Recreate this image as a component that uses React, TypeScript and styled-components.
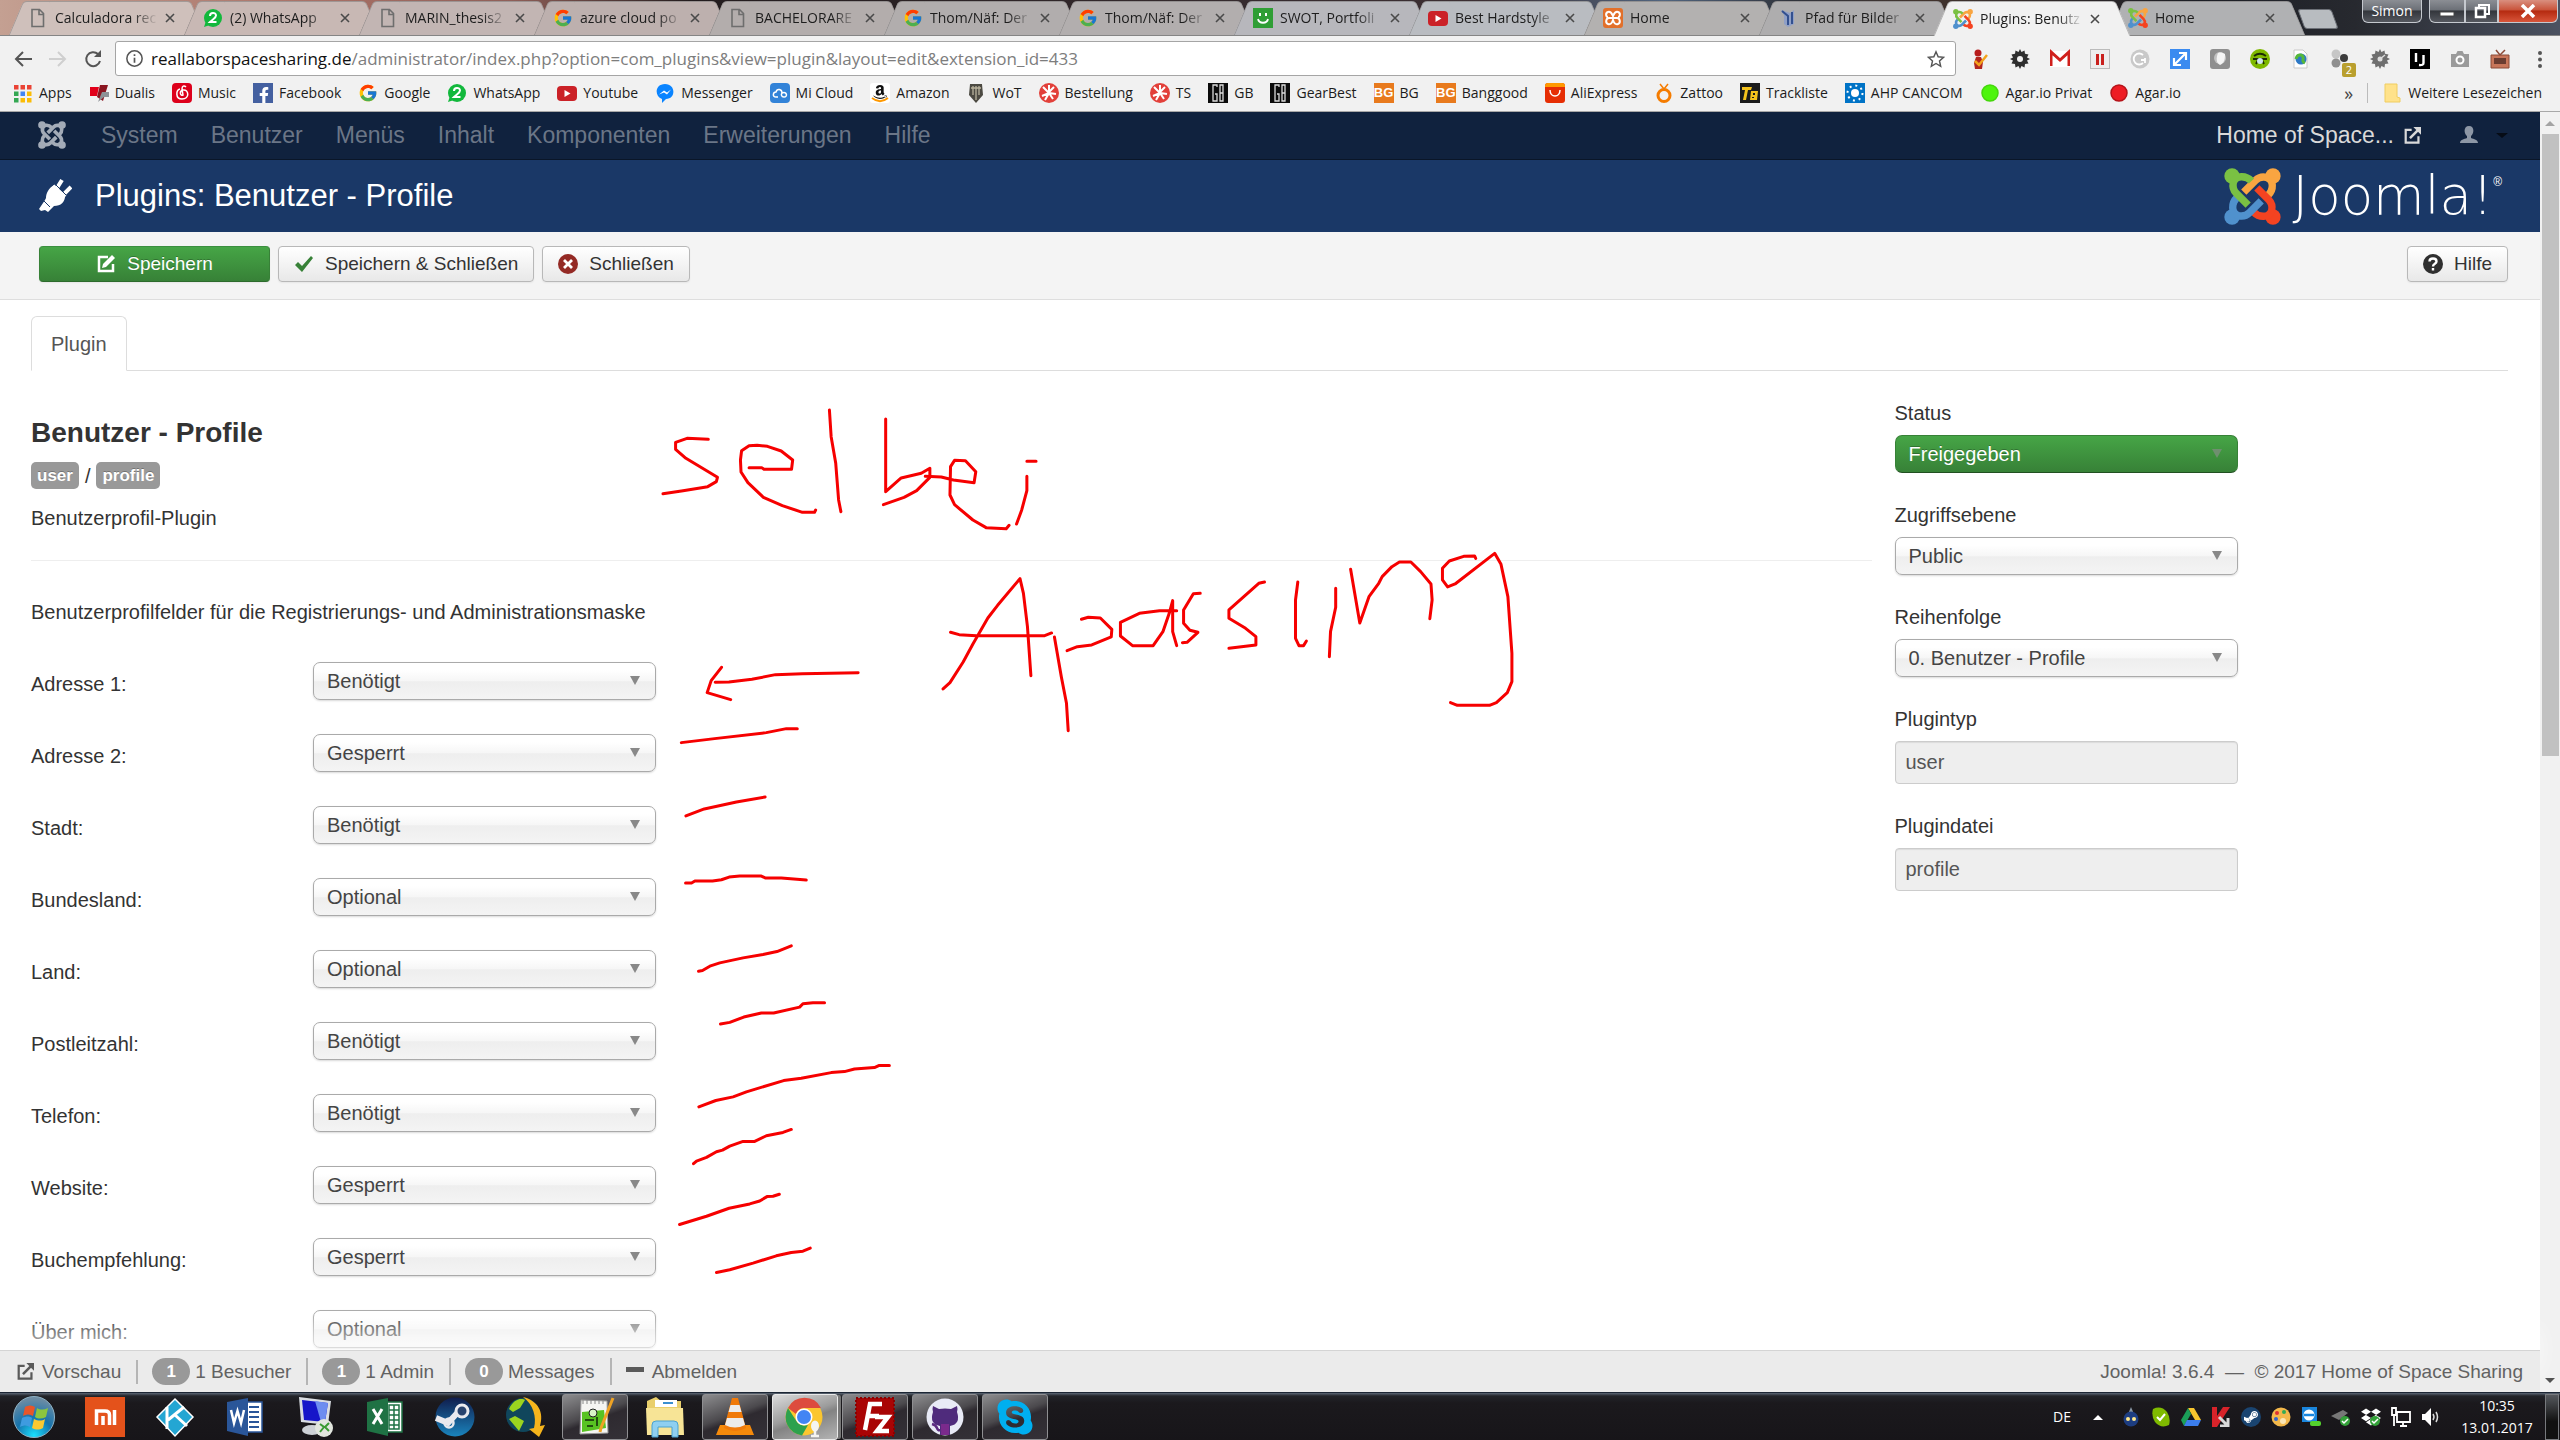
import React from 'react';
import styled, { createGlobalStyle, css } from 'styled-components';
import { FcGoogle } from 'react-icons/fc';
import { FaAmazon, FaDropbox, FaFacebookF, FaGithubAlt, FaSkype, FaSteamSymbol } from 'react-icons/fa';

const ui = '"Open Sans", "Noto Sans", sans-serif';
const page = '"Liberation Sans", Arial, sans-serif';

const GlobalStyle = createGlobalStyle`
  *, *::before, *::after { box-sizing: border-box; }
  html, body { margin: 0; height: 100%; overflow: hidden; background: #fff; }
  svg { display: block; flex: none; }
  button, select, input { font: inherit; margin: 0; }
  h1, h3, p { margin: 0; }
`;

/* ---------- small drawings, all on a 20 x 20 grid ---------- */

type DrawProps = { size?: number };

const arm = 'M-3 -46 C-20 -64 -50 -64 -57 -42 C-61 -26 -57 -18 -48 -9 L-13 26';

function JoomlaMark({ size = 20, mono }: DrawProps & { mono?: string }) {
  const arms: [string, number][] = [
    ['#f9a541', 90],
    ['#f44321', 180],
    ['#5091cd', 270],
    ['#7ac143', 0],
  ];
  return (
    <svg width={size} height={size} viewBox="-85 -85 170 170">
      {arms.map(([color, turn]) => (
        <g key={turn} transform={`rotate(${turn})`}>
          <circle cx="-61" cy="-61" r="23" fill={mono || color} />
          <path d={arm} fill="none" stroke={mono || color} strokeWidth="22" />
        </g>
      ))}
    </svg>
  );
}

function Art({ size = 20, children }: DrawProps & { children: React.ReactNode }) {
  return (
    <svg width={size} height={size} viewBox="0 0 20 20" fill="none">
      {children}
    </svg>
  );
}

const WhatsApp = () => (
  <Art>
    <circle cx="10" cy="10" r="9" fill="#12b83c" />
    <path d="M1 19l2-6 4 4z" fill="#12b83c" />
    <path d="M7 8c0-4 6-4 6-.5 0 2.500-3 3.500-6 6.500h6.500" stroke="#fff" strokeWidth="2" />
  </Art>
);
const Doc = () => (
  <Art>
    <path d="M4 1.500h7.500l4 4v13H4z M11 2v4.500h4.500" stroke="#6e6e6e" strokeWidth="1.600" />
  </Art>
);
const Smile = () => (
  <Art>
    <path d="M0 0h20v20H0z" fill="#2f9e35" />
    <path d="M5 11c1 5 9 5 10 0" stroke="#fff" strokeWidth="1.800" />
    <path d="M6 5h2v3H6zM12 5h2v3h-2z" fill="#fff" />
  </Art>
);
const YouTube = () => (
  <Art>
    <rect y="3" width="20" height="15" rx="4" fill="#cb2127" />
    <path d="M7.500 7l6 3.500-6 3.500z" fill="#fff" />
  </Art>
);
const Xampp = () => (
  <Art>
    <rect width="20" height="20" rx="3" fill="#e2702a" />
    <path d="M5 4c-3 1-2 5 0 5M5 16c-3-1-2-6 1-6h8c3 0 4 5 1 6M15 4c3 1 2 5 0 5M5 4c3-1 4 2 5 4 1-2 2-5 5-4M5 16c3 1 4-1 5-4 1 3 2 5 5 4" stroke="#fff" strokeWidth="2" />
  </Art>
);
const WikiBlue = () => (
  <Art>
    <path d="M3 2l9 3 4-3v14l-6 3-4-3V7z" fill="#8f9fc6" />
    <path d="M4 3l6 5v9M14 4v12" stroke="#33508f" strokeWidth="2" />
  </Art>
);
const AppsGrid = () => (
  <Art>
    {['#ea4335', '#ea4335', '#ea4335', '#34a853', '#4285f4', '#fbbc05', '#34a853', '#fbbc05', '#fbbc05'].map((c, i) => (
      <rect key={i} x={1 + (i % 3) * 6.5} y={2 + Math.floor(i / 3) * 6.5} width="4.500" height="4.500" fill={c} />
    ))}
  </Art>
);
const Dualis = () => (
  <Art>
    <path d="M1 4h9l-2 9H1z" fill="#e2001a" />
    <path d="M11 2h8l-5 16-6-4z" fill="#8a1520" />
    <path d="M13 9h7v5h-5l-6 5z" fill="#8d9296" />
  </Art>
);
const NetEase = () => (
  <Art>
    <rect width="20" height="20" rx="4" fill="#dd001b" />
    <path d="M14 4c-2-2-4-1-4 2l1 6c-3 1-4-4 0-5 6-1 7 9-1 9-7 0-6-9-2-10" stroke="#fff" strokeWidth="1.500" />
  </Art>
);
const Messenger = () => (
  <Art>
    <path d="M10 1c11 0 11 15 1 15l-4 4v-4C-1 13 0 1 10 1z" fill="#0a84ff" />
    <path d="M4 11.500l5-4 3 2 4-3-4 5-3-2z" fill="#fff" />
  </Art>
);
const MiCloud = () => (
  <Art>
    <rect width="20" height="20" rx="4" fill="#3283d8" />
    <path d="M8 14H6c-4 0-3-5 0-5 1-4 6-3 6 1 5-2 6 4 2 4-3 0-3-3-2-4" stroke="#fff" strokeWidth="1.500" />
  </Art>
);
const Tank = () => (
  <Art>
    <path d="M4 1l12 0 1 11-7 8-7-8z" fill="#4c4a42" />
    <path d="M5 5h10M7 3v9M10 3v14M13 3v9" stroke="#b9b39d" strokeWidth="1.300" />
  </Art>
);
const RedStar = () => (
  <Art>
    <circle cx="10" cy="10" r="10" fill="#e2403a" />
    <path d="M10 2v7l5-5M10 10l7 1M10 10l-6-6M10 10l-7 3M10 10l-4 7M10 10l4 6" stroke="#fff" strokeWidth="2" />
  </Art>
);
const GearBest = () => (
  <Art>
    <path d="M0 0h20v20H0z" fill="#0b0b0b" />
    <path d="M9 4V2H5v16h4v-7H7M12 2h3v16h-3zM12 10h3" stroke="#dcdcdc" strokeWidth="1.300" />
  </Art>
);
const Letters = styled.span<{ $bg: string; $fg: string; $size: number }>`
  display: inline-flex;
  align-items: center;
  justify-content: center;
  flex: none;
  width: 20px;
  height: 20px;
  background: ${(p) => p.$bg};
  color: ${(p) => p.$fg};
  font: bold ${(p) => p.$size}px/20px ${page};
`;
const Banggood = () => <Letters $bg="#e87a1d" $fg="#fff" $size={13}>BG</Letters>;
const Ali = () => (
  <Art>
    <rect width="20" height="20" rx="3" fill="#e62e04" />
    <path d="M0 4V3q0-3 3-3h14q3 0 3 3v1z" fill="#ff9900" />
    <path d="M5 7c0 8 10 8 10 0" stroke="#fff" strokeWidth="1.500" />
  </Art>
);
const Zattoo = () => (
  <Art>
    <circle cx="10" cy="12.500" r="6" stroke="#f57c00" strokeWidth="3" />
    <path d="M10 6L6 1M10 6l4-5" stroke="#f57c00" strokeWidth="1.500" />
  </Art>
);
const Track = () => (
  <Art>
    <path d="M0 0h20v20H0z" fill="#1b1b1b" />
    <path d="M2 4h10l-1 3H8L6 17H3L5 7H2zM11 8h7l-1 9h-7z" fill="#f4c21c" />
    <path d="M13 10h2v2h-2zM12 14h2v1h-2z" fill="#1b1b1b" />
  </Art>
);
const Sun = () => (
  <Art>
    <path d="M0 0h20v20H0z" fill="#0073c6" />
    <circle cx="10" cy="10" r="4" fill="#fff" />
    <circle cx="10" cy="10" r="7.500" stroke="#fff" strokeWidth="2" strokeDasharray="2 3.900" />
  </Art>
);
const Blob = ({ fill, edge }: { fill: string; edge: string }) => (
  <Art>
    <circle cx="10" cy="10" r="8" fill={fill} stroke={edge} strokeWidth="1.500" />
  </Art>
);
const Folder = () => (
  <Art>
    <path d="M3 1h12v13l3 1v4H3z" fill="#ffe28a" stroke="#f0cd60" />
  </Art>
);
const AmazonA = () => (
  <Art>
    <rect width="20" height="20" rx="3" fill="#fff" />
    <g transform="translate(2 1)"><FaAmazon size={16} color="#111" /></g>
    <path d="M2 15c5 4 11 4 16 0" stroke="#f90" strokeWidth="1.800" />
  </Art>
);
const FacebookTile = styled.span`
  display: inline-flex;
  width: 20px;
  height: 20px;
  padding-right: 1px;
  align-items: flex-end;
  justify-content: flex-end;
  background: #4460a0;
  color: #fff;
`;

/* ---------- browser frame ---------- */

const Desktop = styled.div`
  position: relative;
  display: flex;
  flex-direction: column;
  height: 100vh;
  overflow: hidden;
  color: #333;
  font: 20px/28px ${page};
`;

const TabStrip = styled.div`
  position: relative;
  display: flex;
  flex: none;
  height: 36px;
  padding: 1px 0 0 16px;
  border-bottom: 1px solid #858585;
  background: linear-gradient(90deg, #c4a092 0, #a97166 12%, #8f5f58 20%, #231c1e 27%, #33292c 45%, #3c2f33 58%, #51657f 65%, #30333b 70%, #42342e 75%, #1c1e25 86%, #27292f 92%, #4b5261 100%);
`;

const Tab = styled.div<{ $fill: string; $active?: boolean }>`
  position: relative;
  z-index: ${(p) => (p.$active ? 2 : 1)};
  display: flex;
  align-items: center;
  flex: none;
  width: 175px;
  height: ${(p) => (p.$active ? 35 : 34)}px;
  padding: 0 16px 0 12px;
  gap: 7px;
  font: 14px/20px ${ui};
  color: #1d1d1d;
  &::before, &::after {
    content: '';
    position: absolute;
    z-index: -1;
    top: 0;
    bottom: 0;
    background: ${(p) => p.$fill};
    border: 1px solid #77757580;
    border-bottom: 0;
  }
  &::before { left: 0; right: 40px; border-right: 0; border-radius: 4px 0 0 0; transform: skewX(-23deg); }
  &::after { left: 40px; right: -7px; border-left: 0; border-radius: 0 4px 0 0; transform: skewX(23deg); }
`;
const TabTitle = styled.span`
  flex: 1;
  overflow: hidden;
  white-space: nowrap;
  mask-image: linear-gradient(90deg, #000 75%, transparent 100%);
`;
const TabClose = styled.button`
  padding: 0;
  border: 0;
  background: none;
  color: #444;
  line-height: 0;
`;
const CloseX = () => (
  <svg width="10" height="10" viewBox="0 0 10 10"><path d="M1 1l8 8M9 1l-8 8" stroke="#4a4a4a" strokeWidth="1.600" /></svg>
);
const NewTab = styled.button`
  width: 34px;
  height: 20px;
  margin: 8px 0 0 10px;
  border: 1px solid #6c7077;
  border-radius: 3px;
  background: #b8bcc0;
  transform: skewX(20deg);
`;
const WindowButtons = styled.div`
  position: absolute;
  top: 0;
  right: 2px;
  display: flex;
  gap: 7px;
`;
const glass = css`
  height: 23px;
  border: 1px solid #c5c9cf;
  border-top: 0;
  background: linear-gradient(#8b8e94 0, #6c7077 45%, #33363c 50%, #55585f 100%);
`;
const UserButton = styled.button`
  ${glass}
  width: 60px;
  padding: 0;
  border-radius: 0 0 6px 6px;
  color: #fff;
  font: 14px/20px ${ui};
`;
const CaptionGroup = styled.div`
  display: flex;
`;
const Caption = styled.button<{ $w: number; $close?: boolean }>`
  ${glass}
  display: flex;
  align-items: center;
  justify-content: center;
  width: ${(p) => p.$w}px;
  padding: 0;
  &:first-child { border-radius: 0 0 0 6px; }
  &:last-child { border-radius: 0 0 6px 0; }
  ${(p) => p.$close && 'background: linear-gradient(#d98f7f 0, #c9543b 45%, #b52a10 50%, #d8553a 100%);'}
`;

const Toolbar = styled.div`
  flex: none;
  background: #f1f1f1;
  border-bottom: 1px solid #a8a8a8;
`;
const AddressRow = styled.div`
  display: flex;
  align-items: center;
  padding: 5px 10px 0 13px;
`;
const NavButtons = styled.div`
  display: flex;
  gap: 15px;
  width: 102px;
`;
const IconButton = styled.button`
  display: inline-flex;
  padding: 0;
  border: 0;
  background: none;
  position: relative;
`;
const AddressBox = styled.div`
  display: flex;
  align-items: center;
  flex: 1;
  height: 35px;
  padding: 0 10px;
  gap: 8px;
  border: 1px solid #a5a5a5;
  border-radius: 3px;
  background: #fff;
`;
const Url = styled.div`
  flex: 1;
  white-space: nowrap;
  font: 17px/24px ${ui};
  color: #7d7d7d;
  b { font-weight: 400; color: #111; }
`;
const Extensions = styled.div`
  display: flex;
  gap: 20px;
  padding-left: 14px;
`;
const Badge = styled.span`
  position: absolute;
  right: -6px;
  bottom: -8px;
  width: 14px;
  height: 14px;
  border-radius: 2px;
  background: #b99f2e;
  color: #fff;
  font: 11px/14px ${ui};
`;
const BookmarkRow = styled.nav`
  display: flex;
  align-items: center;
  height: 35px;
  padding: 0 18px 1px 13px;
`;
const Bookmark = styled.a`
  display: inline-flex;
  align-items: center;
  gap: 6px;
  padding-right: 17px;
  white-space: nowrap;
  text-decoration: none;
  font: 14px/20px ${ui};
  color: #1c1c1c;
  &:last-child { padding: 0 0 0 14px; border-left: 1px solid #bbb; }
`;
const More = styled.button`
  margin-left: auto;
  padding: 0 14px;
  border: 0;
  background: none;
  font: 18px/20px ${ui};
  color: #444;
`;

const tabs: { title: string; icon: React.ReactNode; fill: string; active?: boolean }[] = [
  { title: 'Calculadora rec', icon: <Doc />, fill: '#cfc0bb' },
  { title: '(2) WhatsApp', icon: <WhatsApp />, fill: '#c8b8b4' },
  { title: 'MARIN_thesis2', icon: <Doc />, fill: '#c2b5b3' },
  { title: 'azure cloud po', icon: <FcGoogle size={20} />, fill: '#bdb0ae' },
  { title: 'BACHELORARE', icon: <Doc />, fill: '#b3adac' },
  { title: 'Thom/Näf: Der', icon: <FcGoogle size={20} />, fill: '#b1adad' },
  { title: 'Thom/Näf: Der', icon: <FcGoogle size={20} />, fill: '#b2aeae' },
  { title: 'SWOT, Portfoli', icon: <Smile />, fill: '#b7b7bc' },
  { title: 'Best Hardstyle', icon: <YouTube />, fill: '#b9bcc1' },
  { title: 'Home', icon: <Xampp />, fill: '#b3b1b0' },
  { title: 'Pfad für Bilder', icon: <WikiBlue />, fill: '#aeadae' },
  { title: 'Plugins: Benutz', icon: <JoomlaMark />, fill: '#f1f1f1', active: true },
  { title: 'Home', icon: <JoomlaMark />, fill: '#b0b1b3' },
];

const bookmarks: [string, React.ReactNode][] = [
  ['Apps', <AppsGrid />],
  ['Dualis', <Dualis />],
  ['Music', <NetEase />],
  ['Facebook', <FacebookTile><FaFacebookF size={16} /></FacebookTile>],
  ['Google', <FcGoogle size={20} />],
  ['WhatsApp', <WhatsApp />],
  ['Youtube', <YouTube />],
  ['Messenger', <Messenger />],
  ['Mi Cloud', <MiCloud />],
  ['Amazon', <AmazonA />],
  ['WoT', <Tank />],
  ['Bestellung', <RedStar />],
  ['TS', <RedStar />],
  ['GB', <GearBest />],
  ['GearBest', <GearBest />],
  ['BG', <Banggood />],
  ['Banggood', <Banggood />],
  ['AliExpress', <Ali />],
  ['Zattoo', <Zattoo />],
  ['Trackliste', <Track />],
  ['AHP CANCOM', <Sun />],
  ['Agar.io Privat', <Blob fill="#4df50c" edge="#45d70c" />],
  ['Agar.io', <Blob fill="#ee1c24" edge="#b5141a" />],
];

const gearPath = 'M10 0l1.500 3 3-1.500.5 3.300L18.500 5.500 17 8.500l3 1.500-3 1.500 1.500 3-3.500.5-.5 3.500-3-1.500L10 20l-1.500-3-3 1.500-.5-3.500-3.500-.5L3 11.500 0 10l3-1.500-1.500-3 3.500-.7.500-3.300 3 1.500z';

const extensions: [string, React.ReactNode][] = [
  ['Checker', <Art><circle cx="8" cy="4" r="3.500" fill="#b71c1c" /><path d="M6 8h5l2 5-1 7H5l-1-6z" fill="#b3261e" /><path d="M5 12l4 4 8-10" stroke="#f3a21b" strokeWidth="2.500" /></Art>],
  ['Settings', <Art><path d={gearPath} fill="#2e2e2e" /><circle cx="10" cy="10" r="3" fill="#f1f1f1" /></Art>],
  ['Mail', <Art><path d="M0 2h20v16H0z" fill="#fff" /><path d="M1 17V3l9 8 9-8v14" stroke="#d0201c" strokeWidth="3" /></Art>],
  ['Pause', <Art><rect x=".5" y=".5" width="19" height="19" fill="#eee" stroke="#bbb" /><path d="M7.500 5v11M12.500 5v11" stroke="#c9211e" strokeWidth="3" /></Art>],
  ['Reload', <Art><circle cx="10" cy="10" r="9.500" fill="#c9c9c9" /><path d="M13 6a5.500 5.500 0 1 0 0 8M15 14V9M15 11h-4" stroke="#fff" strokeWidth="1.800" /></Art>],
  ['Resize', <Art><path d="M0 0h20v20H0z" fill="#3b8bf0" /><path d="M4 16L16 4M9 4h7v7M11 16H4V9" stroke="#fff" strokeWidth="2.200" /></Art>],
  ['Shield', <Art><rect width="20" height="20" rx="3" fill="#8f8f8f" /><circle cx="10" cy="9" r="6" fill="#c2c2c2" /><path d="M8 4c3-1 5 0 7 1 0 6-1 9-5 11-4-2-4-7-2-12z" fill="#f4f4f4" /></Art>],
  ['Spy', <Art><circle cx="10" cy="10" r="10" fill="#7fb900" /><path d="M4 7c4-3 8-3 12 0M3 10h14M6 15l2-4M14 15l-2-4" stroke="#1d2b05" strokeWidth="1.800" /><circle cx="10" cy="12" r="3" fill="#cfe6f0" /></Art>],
  ['Translate', <Art><path d="M4 1h9l4 4v14H4z" fill="#fff" stroke="#c9c9c9" /><circle cx="11" cy="10" r="5.500" fill="#2d79c7" /><path d="M6 10c1-5 6-5 7-2s-2 4 2 6" stroke="#56b83b" strokeWidth="3" /></Art>],
  ['Groups', <Art><circle cx="6" cy="5" r="4.500" fill="#c6c6c6" /><circle cx="14" cy="9" r="4" fill="#3c3c3c" /><circle cx="6" cy="14" r="4.500" fill="#8f8f8f" /></Art>],
  ['Gear', <Art><path d={gearPath} fill="#6f6f6f" /><circle cx="10" cy="10" r="2.500" fill="#ddd" /><path d="M10 10l5-4" stroke="#ddd" strokeWidth="1.500" /></Art>],
  ['IJ', <Art><path d="M0 0h20v20H0z" fill="#000" /><path d="M6 4v9M13.500 6v8q0 2.500-4.500 2" stroke="#fff" strokeWidth="2.400" /></Art>],
  ['Camera', <Art><path d="M1 5h5l1.500-3h5L14 5h5v13H1z" fill="#9b9b9b" /><circle cx="10" cy="11" r="3.500" stroke="#fff" strokeWidth="2" /></Art>],
  ['TV', <Art><path d="M1 6h18v13H1z" fill="#c8765a" stroke="#8c4a37" /><path d="M4 9h12v6H4z" fill="#6b3c30" /><path d="M10 6L6 1M10 6l5-5" stroke="#8c4a37" strokeWidth="1.500" /></Art>],
  ['Menu', <Art><circle cx="10" cy="4" r="2" fill="#555" /><circle cx="10" cy="10.500" r="2" fill="#555" /><circle cx="10" cy="17" r="2" fill="#555" /></Art>],
];

function BrowserFrame() {
  return (
    <>
      <TabStrip>
        {tabs.map((t, i) => (
          <Tab key={i} $fill={t.fill} $active={t.active}>
            {t.icon}
            <TabTitle>{t.title}</TabTitle>
            <TabClose aria-label="Tab schließen"><CloseX /></TabClose>
          </Tab>
        ))}
        <NewTab aria-label="Neuer Tab" />
        <WindowButtons>
          <UserButton>Simon</UserButton>
          <CaptionGroup>
            <Caption $w={36} aria-label="Minimieren"><svg width="16" height="12"><path d="M1 7h14v4H1z" fill="#fff" stroke="#444" /></svg></Caption>
            <Caption $w={33} aria-label="Verkleinern"><svg width="18" height="16" fill="none"><path d="M6 4V2h10v9h-3" stroke="#fff" strokeWidth="2" /><path d="M3 5h9v9H3z" stroke="#fff" strokeWidth="2.500" /></svg></Caption>
            <Caption $w={60} $close aria-label="Schließen"><svg width="16" height="14"><path d="M2 1l12 12M14 1L2 13" stroke="#fff" strokeWidth="3.500" /></svg></Caption>
          </CaptionGroup>
        </WindowButtons>
      </TabStrip>
      <Toolbar>
        <AddressRow>
          <NavButtons>
            <IconButton aria-label="Zurück"><Art><path d="M19 10H3M10 3l-7 7 7 7" stroke="#555" strokeWidth="2" /></Art></IconButton>
            <IconButton aria-label="Vor"><Art><path d="M1 10h16M10 3l7 7-7 7" stroke="#cfcfcf" strokeWidth="2" /></Art></IconButton>
            <IconButton aria-label="Neu laden"><Art><path d="M17 12a7 7 0 1 1-2-7" stroke="#555" strokeWidth="2" /><path d="M18 1v7h-7z" fill="#555" /></Art></IconButton>
          </NavButtons>
          <AddressBox>
            <svg width="17" height="17" viewBox="0 0 20 20" fill="none"><circle cx="10" cy="10" r="9" stroke="#555" strokeWidth="1.800" /><path d="M10 9v6M10 5v2" stroke="#555" strokeWidth="2" /></svg>
            <Url><b>reallaborspacesharing.de</b>/administrator/index.php?option=com_plugins&amp;view=plugin&amp;layout=edit&amp;extension_id=433</Url>
            <IconButton aria-label="Lesezeichen"><svg width="18" height="18" viewBox="0 0 20 20" fill="none"><path d="M10 2l2.400 5.500 6 .6-4.500 4 1.300 6L10 15l-5.200 3.100 1.300-6-4.500-4 6-.6z" stroke="#555" strokeWidth="1.600" /></svg></IconButton>
          </AddressBox>
          <Extensions>
            {extensions.map(([name, icon]) => (
              <IconButton key={name} aria-label={name}>
                {icon}
                {name === 'Groups' && <Badge>2</Badge>}
              </IconButton>
            ))}
          </Extensions>
        </AddressRow>
        <BookmarkRow>
          {bookmarks.map(([name, icon]) => (
            <Bookmark key={name} href="#">{icon}{name}</Bookmark>
          ))}
          <More>»</More>
          <Bookmark href="#"><Folder />Weitere Lesezeichen</Bookmark>
        </BookmarkRow>
      </Toolbar>
    </>
  );
}

/* ---------- Joomla administration ---------- */

const Viewport = styled.div`
  display: flex;
  flex: 1;
  min-height: 0;
`;
const Site = styled.div`
  display: flex;
  flex-direction: column;
  flex: 1;
  min-width: 0;
  background: #fff;
`;
const ScrollTrack = styled.div`
  display: flex;
  flex-direction: column;
  align-items: center;
  justify-content: space-between;
  width: 20px;
  padding: 9px 1px;
  background: #f1f1f1;
`;
const ScrollThumb = styled.div`
  width: 17px;
  height: 622px;
  margin: 8px 0 auto;
  background: #c1c1c1;
`;
const Triangle = styled.span<{ $up?: boolean; $color: string; $half?: number }>`
  width: 0;
  height: 0;
  border: solid transparent;
  border-width: ${(p) => (p.$up ? '0' : '5px')} ${(p) => p.$half || 5}px ${(p) => (p.$up ? '5px' : '0')};
  border-${(p) => (p.$up ? 'bottom' : 'top')}-color: ${(p) => p.$color};
`;
const MenuBar = styled.nav`
  display: flex;
  align-items: center;
  flex: none;
  height: 48px;
  padding: 0 32px 1px 38px;
  gap: 33px;
  background: #10223e;
  border-bottom: 1px solid #0a1628;
  font-size: 23px;
  > svg { margin-right: 2px; }
`;
const MenuLink = styled.a<{ $site?: boolean }>`
  display: inline-flex;
  align-items: center;
  gap: 10px;
  text-decoration: none;
  color: ${(p) => (p.$site ? '#d9d9d9' : '#6b7687')};
  ${(p) => p.$site && 'margin-left: auto;'}
`;
const UserMenu = styled.button`
  display: flex;
  align-items: center;
  gap: 18px;
  margin-left: 6px;
  padding: 0;
  border: 0;
  background: none;
`;
const Header = styled.header`
  display: flex;
  align-items: center;
  flex: none;
  height: 72px;
  padding: 0 38px;
  gap: 23px;
  background: #1a3867;
  color: #fff;
`;
const Title = styled.h1`
  flex: 1;
  font-size: 31px;
  line-height: 36px;
  font-weight: 400;
`;
const Brand = styled.div`
  display: flex;
  align-items: center;
  gap: 12px;
  font: 200 53px/56px "DejaVu Sans", sans-serif;
  sup { font: 12px/12px ${page}; vertical-align: 28px; }
`;
const Actions = styled.div`
  display: flex;
  flex: none;
  gap: 8px;
  height: 68px;
  padding: 14px 32px 0 39px;
  background: #f4f4f4;
  border-bottom: 1px solid #dedede;
`;
const Button = styled.button<{ $primary?: boolean; $end?: boolean }>`
  display: inline-flex;
  align-items: center;
  justify-content: center;
  gap: 11px;
  height: 36px;
  padding: 0 15px;
  border: 1px solid #b8b8b8;
  border-radius: 4px;
  background: linear-gradient(#fff, #e8e8e8);
  box-shadow: 0 1px 2px rgba(0, 0, 0, 0.06);
  color: #333;
  font-size: 19px;
  line-height: 24px;
  ${(p) => p.$primary && css`
    min-width: 231px;
    border-color: #3b8f3f #378137 #2d6b2d;
    background: linear-gradient(#46a546, #378137);
    color: #fff;
    text-shadow: 0 -1px 0 rgba(0, 0, 0, 0.25);
  `}
  ${(p) => p.$end && 'margin-left: auto;'}
`;
const Content = styled.main`
  flex: 1;
  min-height: 0;
  overflow: hidden;
  padding: 16px 32px 0 31px;
`;
const TabList = styled.div`
  display: flex;
  border-bottom: 1px solid #ddd;
`;
const PageTab = styled.button`
  height: 55px;
  margin-bottom: -1px;
  padding: 0 19px;
  border: 1px solid #ddd;
  border-bottom-color: #fff;
  border-radius: 6px 6px 0 0;
  background: #fff;
  color: #555;
`;
const Columns = styled.div`
  display: grid;
  grid-template-columns: 3fr 1fr;
  gap: 23px;
`;
const FormColumn = styled.section`
  padding-top: 46px;
`;
const Heading = styled.h3`
  font-size: 28px;
  line-height: 32px;
`;
const Tags = styled.div`
  display: flex;
  align-items: center;
  gap: 6px;
  margin: 13px 0 15px;
  height: 27px;
`;
const Tag = styled.span`
  padding: 0 6px;
  border-radius: 5px;
  background: #999;
  color: #fff;
  font-size: 17px;
  line-height: 27px;
  font-weight: 700;
  text-shadow: 0 -1px 0 rgba(0, 0, 0, 0.25);
`;
const Rule = styled.hr`
  margin: 28px 0 37px;
  border: 0;
  border-top: 1px solid #eee;
`;
const Fields = styled.div`
  display: grid;
  gap: 34px;
  margin-top: 36px;
`;
const FieldRow = styled.div`
  display: flex;
  height: 38px;
  label { width: 282px; padding-top: 8px; }
`;
const SideColumn = styled.aside`
  display: grid;
  align-content: start;
  gap: 28px;
  padding-top: 28px;
`;
const SideField = styled.div`
  display: flex;
  flex-direction: column;
  align-items: flex-start;
  gap: 8px;
`;
const SelectBox = styled.div<{ $on?: boolean }>`
  position: relative;
  width: 343px;
  height: 38px;
  &::after {
    content: '';
    position: absolute;
    top: 14px;
    right: 16px;
    border: solid transparent;
    border-width: 9px 5px 0;
    border-top-color: ${(p) => (p.$on ? '#6f8f6f' : '#888')};
  }
  select {
    appearance: none;
    width: 100%;
    height: 38px;
    padding: 0 36px 0 13px;
    border: 1px solid #aaa;
    border-radius: 7px;
    background: linear-gradient(#fff 20%, #f6f6f6 50%, #eee 52%, #f4f4f4 100%);
    box-shadow: 0 1px 2px rgba(0, 0, 0, 0.15);
    color: #444;
    ${(p) => p.$on && css`
      border-color: #378137 #378137 #215021;
      background: linear-gradient(#46a546, #378137);
      box-shadow: none;
      color: #fff;
      text-shadow: 0 -1px 0 rgba(0, 0, 0, 0.25);
    `}
  }
`;
const TextInput = styled.input`
  width: 343px;
  height: 43px;
  padding: 0 10px;
  border: 1px solid #ccc;
  border-radius: 4px;
  background: #eee;
  box-shadow: inset 0 1px 1px rgba(0, 0, 0, 0.08);
  color: #555;
`;
const StatusBar = styled.footer`
  position: relative;
  display: flex;
  align-items: center;
  flex: none;
  height: 42px;
  padding: 0 17px;
  border-top: 1px solid #d4d4d4;
  background: #ebebeb;
  box-shadow: 0 -22px 22px rgba(255, 255, 255, 0.6);
  color: #626262;
  font-size: 19px;
  line-height: 24px;
`;
const StatusItem = styled.a`
  display: inline-flex;
  align-items: center;
  gap: 5px;
  padding-right: 15px;
  margin-right: 14px;
  border-right: 2px solid #b5b5b5;
  text-decoration: none;
  color: inherit;
  svg { margin-right: 3px; }
  &:last-of-type { border-right: 0; }
`;
const Count = styled.span`
  width: 38px;
  border-radius: 14px;
  background: #999;
  color: #fff;
  font-size: 17px;
  line-height: 27px;
  font-weight: 700;
  text-align: center;
`;
const Copyright = styled.span`
  margin-left: auto;
`;

const ExternalIcon = ({ size = 20, color }: { size?: number; color: string }) => (
  <Art size={size}>
    <path d="M9 3.500H2v15h15V11" stroke={color} strokeWidth="2.600" />
    <path d="M7 13L17 3" stroke={color} strokeWidth="3" />
    <path d="M11 0h9v9z" fill={color} />
  </Art>
);

const fieldRows: [string, string][] = [
  ['Adresse 1:', 'Benötigt'],
  ['Adresse 2:', 'Gesperrt'],
  ['Stadt:', 'Benötigt'],
  ['Bundesland:', 'Optional'],
  ['Land:', 'Optional'],
  ['Postleitzahl:', 'Benötigt'],
  ['Telefon:', 'Benötigt'],
  ['Website:', 'Gesperrt'],
  ['Buchempfehlung:', 'Gesperrt'],
  ['Über mich:', 'Optional'],
];
const sideSelects: [string, string][] = [
  ['Status', 'Freigegeben'],
  ['Zugriffsebene', 'Public'],
  ['Reihenfolge', '0. Benutzer - Profile'],
];
const sideInputs: [string, string][] = [
  ['Plugintyp', 'user'],
  ['Plugindatei', 'profile'],
];
const menu = ['System', 'Benutzer', 'Menüs', 'Inhalt', 'Komponenten', 'Erweiterungen', 'Hilfe'];

function Administration() {
  return (
    <Viewport>
      <Site>
        <MenuBar>
          <JoomlaMark size={28} mono="#a3abb7" />
          {menu.map((m) => <MenuLink key={m} href="#">{m}</MenuLink>)}
          <MenuLink $site href="#">Home of Space...<ExternalIcon size={17} color="#d9d9d9" /></MenuLink>
          <UserMenu aria-label="Benutzermenü">
            <svg width="18" height="18" viewBox="0 0 18 18" fill="#8d97a6"><path d="M9 0c6 0 5 8 2 10v2c3 1 7 2 7 5H0c0-3 4-4 7-5v-2C4 8 3 0 9 0z" /></svg>
            <Triangle $color="#060c16" $half={6} />
          </UserMenu>
        </MenuBar>
        <Header>
          <svg width="34" height="40" viewBox="0 0 34 40" fill="none">
            <path d="M16 9l11 11c0 6-4 10-11 10l-6 6-3-2-4 1-2-2 6-9 1-2c0-5 3-10 8-13z" fill="#fff" />
            <path d="M19 12l5-8M26 18l7-7M15 10l12 11" stroke="#fff" strokeWidth="4" />
            <path d="M6 25l6 6M18 9l10 10" stroke="#1a3867" strokeWidth="1" />
          </svg>
          <Title>Plugins: Benutzer - Profile</Title>
          <Brand>
            <JoomlaMark size={57} />
            <span>Joomla!<sup>®</sup></span>
          </Brand>
        </Header>
        <Actions>
          <Button $primary>
            <Art><path d="M12 3H3v14h14v-7" stroke="#fff" strokeWidth="2.500" /><path d="M6 14l1-4 9-9 3 3-9 9z" fill="#fff" /></Art>
            Speichern
          </Button>
          <Button><Art><path d="M1 11l3-3 4 4L17 2l2 2L8 18z" fill="#378137" /></Art>Speichern &amp; Schließen</Button>
          <Button><Art><circle cx="10" cy="10" r="10" fill="#942a25" /><path d="M6 6l8 8M14 6l-8 8" stroke="#fff" strokeWidth="2.800" /></Art>Schließen</Button>
          <Button $end><Art><circle cx="10" cy="10" r="10" fill="#2f2f2f" /><path d="M6.500 7.500c0-4 7-4 7 0 0 2.500-3.500 2-3.500 5M10 14v2.500" stroke="#fff" strokeWidth="2.400" /></Art>Hilfe</Button>
        </Actions>
        <Content>
          <TabList><PageTab>Plugin</PageTab></TabList>
          <Columns>
            <FormColumn>
              <Heading>Benutzer - Profile</Heading>
              <Tags><Tag>user</Tag>/<Tag>profile</Tag></Tags>
              <p>Benutzerprofil-Plugin</p>
              <Rule />
              <p>Benutzerprofilfelder für die Registrierungs- und Administrationsmaske</p>
              <Fields>
                {fieldRows.map(([label, value]) => (
                  <FieldRow key={label}>
                    <label htmlFor={label}>{label}</label>
                    <SelectBox><select id={label} defaultValue={value}><option>{value}</option></select></SelectBox>
                  </FieldRow>
                ))}
              </Fields>
            </FormColumn>
            <SideColumn>
              {sideSelects.map(([label, value]) => (
                <SideField key={label}>
                  <label htmlFor={label}>{label}</label>
                  <SelectBox $on={label === 'Status'}><select id={label} defaultValue={value}><option>{value}</option></select></SelectBox>
                </SideField>
              ))}
              {sideInputs.map(([label, value]) => (
                <SideField key={label}>
                  <label htmlFor={label}>{label}</label>
                  <TextInput id={label} readOnly defaultValue={value} />
                </SideField>
              ))}
            </SideColumn>
          </Columns>
        </Content>
        <StatusBar>
          <StatusItem href="#"><ExternalIcon size={17} color="#5a5a5a" />Vorschau</StatusItem>
          <StatusItem href="#"><Count>1</Count>1 Besucher</StatusItem>
          <StatusItem href="#"><Count>1</Count>1 Admin</StatusItem>
          <StatusItem href="#"><Count>0</Count>Messages</StatusItem>
          <StatusItem href="#"><svg width="18" height="10"><path d="M0 0h18v5H0z" fill="#5a5a5a" /></svg>Abmelden</StatusItem>
          <Copyright>Joomla! 3.6.4 &nbsp;—&nbsp; © 2017 Home of Space Sharing</Copyright>
        </StatusBar>
      </Site>
      <ScrollTrack>
        <Triangle $up $color="#a3a3a3" />
        <ScrollThumb />
        <Triangle $color="#505050" />
      </ScrollTrack>
    </Viewport>
  );
}

/* ---------- pen marks over the page ---------- */

const Ink = styled.svg`
  position: absolute;
  top: 0;
  left: 0;
  width: 2560px;
  height: 1440px;
  pointer-events: none;
  fill: none;
  stroke: #f60000;
  stroke-width: 3px;
  stroke-linejoin: round;
  stroke-linecap: round;
  path { vector-effect: non-scaling-stroke; }
`;
const writing = [
  'M119 178L82 175L62 187V208L80 235L135 292L133 305L118 320L75 332L40 341',
  'M190 263H212L216 268H264L266 240L246 213L222 199L204 196L190 197L177 212L175 240L176 276L188 308L215 352L248 377L283 397H304L306 390',
  'M330 90L333 170L341 250L346 360L350 395',
  'M428 117V335L455 294L490 280L505 265V292L482 332L460 352L424 374',
  'M497 289L525 291L546 300L582 308L585 275L567 242L548 241L541 260L540 345L548 374L580 420L603 443L638 446L643 436',
  'M674 289V332L665 390L656 432M674 244H690',
  'M528 927L540 908L563 846L580 792L606 714L623 676L662 596L668 640L675 740L681 887M541 757L556 764L586 767H705L717 759',
  'M722 771L734 890L743 970L746 1052M769 718L781 712L802 714L822 748L821 771L787 795L762 800L744 812',
  'M935 692L905 692L870 700L837 727V768L858 797H894L911 755L922 700L928 662V755L935 797',
  'M976 640L964 641L947 690V730L958 751L972 757L953 787L945 788',
  'M1088 606L1078 610L1026 690V715L1055 745L1073 770V795L1055 799L1026 805',
  'M1146 606L1142 660V775L1148 797H1156L1161 783M1212 625V682L1203 755L1201 830',
  'M1238 568L1254 729L1270 650L1287 610L1293 590L1310 560L1323 546H1343L1360 575L1378 612L1380 660L1376 716',
  'M1456 535L1454 528L1435 529L1410 543L1398 565V600L1407 621L1420 612L1489 520L1500 553L1512 650L1519 820L1519 905L1511 938L1492 968L1480 976H1424L1412 968',
  'M380 878L283 881L236 884L195 898L155 906L131 907M142 862L124 902L117 938L158 959',
  'M72 1088L130 1076L220 1058L255 1046H274M80 1308L112 1287L168 1266L218 1251',
];
const dashes = [
  'M137 310H155L165 304H218L245 300L268 292L300 289H365L378 295H425L500 301',
  'M176 575L188 573L210 560L240 550L310 535L370 525L412 516L455 499',
  'M242 734L270 729L312 713L365 701H402L480 683L490 673L520 670H555',
  'M177 983L228 964L280 953L320 938L432 904L485 897L575 880L615 877L645 869L705 865L718 859H750',
  'M161 1154L170 1146L200 1135L230 1118L248 1113L270 1101L310 1087H345L380 1070L430 1060L455 1051',
  'M119 1337L200 1312L268 1288L330 1275L360 1266L382 1253L400 1252L419 1246',
  'M230 1481L270 1473L340 1453L410 1431L455 1421L490 1417L512 1408',
];

/* ---------- taskbar ---------- */

const Taskbar = styled.footer`
  display: flex;
  align-items: center;
  flex: none;
  height: 48px;
  padding: 2px 0 1px 2px;
  gap: 4px;
  border-top: 1px solid #1b2533;
  background: linear-gradient(#5b6675 0, #222429 3px, #1b191d 10px, #171519 100%);
`;
const Task = styled.button<{ $open?: boolean; $focus?: boolean }>`
  display: flex;
  align-items: center;
  justify-content: center;
  width: 66px;
  height: 46px;
  padding: 0;
  border: 1px solid transparent;
  border-radius: 3px;
  background: none;
  ${(p) => p.$open && 'border-color: #8f8f92; background: linear-gradient(160deg, #8d8d8f 0, #4b494d 45%, #2e2a30 55%, #343137 100%);'}
  ${(p) => p.$focus && 'border-color: #e8e8e8; background: linear-gradient(160deg, #dcdcdc 0, #9c9c9c 45%, #838383 55%, #b4b4b4 100%); box-shadow: 4px 0 0 -1px #777;'}
`;
const Tray = styled.div`
  display: flex;
  align-items: center;
  gap: 10px;
  margin-left: auto;
  color: #fff;
  font: 14px/22px ${ui};
`;
const Lang = styled.span`
  margin-right: 12px;
`;
const TrayArrow = styled.span`
  margin-right: 8px;
`;
const Clock = styled.time`
  width: 76px;
  margin-left: 8px;
  text-align: center;
`;
const ShowDesktop = styled.button`
  width: 14px;
  height: 46px;
  padding: 0;
  margin-right: 1px;
  border: 1px solid #77797d;
  background: linear-gradient(#55585d, #111 60%);
`;

const Big = ({ children }: { children: React.ReactNode }) => (
  <svg width="44" height="44" viewBox="0 0 44 44" fill="none">{children}</svg>
);
const Office = ({ dark, light, word }: { dark: string; light: string; word?: boolean }) => (
  <Big>
    <path d="M24 7h15v30H24z" fill="#fff" stroke={light} strokeWidth="1.500" />
    {word
      ? <path d="M26 12h10M26 17h10M26 22h10M26 27h10M26 32h10" stroke={light} strokeWidth="2" />
      : <path d="M26 10h10v24H26zM31 10v24M26 15h10M26 20h10M26 25h10M26 30h10" stroke={light} strokeWidth="1.500" />}
    <path d="M4 7l21-4v38L4 36z" fill={dark} />
    {word
      ? <path d="M8 15l3 13 3.500-12L18 28l3-13" stroke="#fff" strokeWidth="2.500" />
      : <path d="M10 14l9 15M19 14l-9 15" stroke="#fff" strokeWidth="3" />}
  </Big>
);

const tasks: { name: string; open?: boolean; focus?: boolean; icon: React.ReactNode }[] = [
  { name: 'Start', icon: <Big><defs><radialGradient id="orb" cx=".5" cy=".95" r=".9"><stop offset="0" stopColor="#19e0ff" /><stop offset=".5" stopColor="#1673ad" /><stop offset="1" stopColor="#6d8ca3" /></radialGradient></defs><circle cx="21" cy="22" r="20.500" fill="url(#orb)" stroke="#8fb3c6" /><path d="M12 12c4-2 7-2 10 0l-2 9c-3-2-6-2-10 0z" fill="#e8562a" /><path d="M24 13c3 2 7 2 11 0l-2 9c-4 2-8 2-11 0z" fill="#8cc63f" /><path d="M9 23c4-2 8-2 10 0l-2 9c-3-2-6-2-10 0z" fill="#3f9be0" /><path d="M21 24c4 2 8 2 11 0l-2 9c-4 2-7 2-11 0z" fill="#fbc931" /></Big> },
  { name: 'Mi', icon: <Big><path d="M2 2h40v40H2z" fill="#e4521b" /><path d="M13.500 30V16H22q4.500 0 4.500 4v10M20 21v9M31.500 15v15" stroke="#fff" strokeWidth="3.500" /></Big> },
  { name: 'Kodi', icon: <Big><path d="M22 4l18 18-18 19L4 22z" fill="#24a6d3" stroke="#fff" strokeWidth="1.500" /><path d="M14 12v22M15 25L31 12M22 20l12 11" stroke="#fff" strokeWidth="3" /></Big> },
  { name: 'Word', icon: <Office dark="#2a5699" light="#2a5699" word /> },
  { name: 'Remote', icon: <Big><path d="M6 2l32 4-3 24-27-3z" fill="#d9dde2" /><path d="M9 5l26 3-3 19-21-2z" fill="#1616c9" /><path d="M22 6l13 2-3 19-4 0z" fill="#6d8df0" /><ellipse cx="19" cy="35" rx="10" ry="5" fill="#cdd1d6" /><circle cx="31" cy="33" r="9" fill="#e2e6df" /><path d="M27 29l4 3-4 5M36 28l-4 4 4 4" stroke="#3a9a32" strokeWidth="2" /></Big> },
  { name: 'Excel', icon: <Office dark="#1f7244" light="#1f7244" /> },
  { name: 'Steam', icon: <Big><defs><linearGradient id="steam" x2="0" y2="1"><stop offset="0" stopColor="#101c4c" /><stop offset="1" stopColor="#1a84bd" /></linearGradient></defs><circle cx="22" cy="22" r="19.500" fill="url(#steam)" /><path d="M3 23l12 5 12-13" stroke="#e9e9ee" strokeWidth="6" /><circle cx="29" cy="16" r="6" fill="#29436e" stroke="#e9e9ee" strokeWidth="3" /><circle cx="16" cy="28" r="4.500" stroke="#e9e9ee" strokeWidth="2.500" /></Big> },
  { name: 'Download', icon: <Big><circle cx="20" cy="20" r="17" fill="#10465c" /><path d="M6 14c5-11 13-11 16-9l-5 8-7 4zM6 24l6-3 9 5-5 10z" fill="#9bd41f" /><path d="M20 2c16 4 21 16 17 29l5-1-6 12-10-8 5-1C34 22 30 9 20 2z" fill="#f6b51c" /></Big> },
  { name: 'Editor', open: true, icon: <Big><path d="M8 5l26 1 1 32-28 1z" fill="#f5f5f2" stroke="#999" /><path d="M9 17l22-2 2 18-24 4z" fill="#58c322" /><circle cx="20" cy="18" r="4" fill="#d9f5c8" stroke="#222" /><path d="M12 25h9M24 22v9M14 31h6" stroke="#234d10" strokeWidth="2" /><path d="M40 3L28 33l-1 4" stroke="#efa324" strokeWidth="3" /><path d="M10 5v4M14 5v4M18 5v4M22 5v4M26 5v4M30 5v4" stroke="#888" /></Big> },
  { name: 'Explorer', icon: <Big><path d="M4 6l9-4 5 4h20v34H4z" fill="#e9cf6c" /><path d="M12 5h22v7H12z" fill="#fff" /><path d="M20 8h10" stroke="#3a8fd0" strokeWidth="2" /><path d="M3 13h37l1 27H4z" fill="#f7e496" /><path d="M9 42V30q0-4 4-4h18q4 0 4 4v12h-6V32H15v10z" fill="#8ecff0" stroke="#4aa2cf" /></Big> },
  { name: 'VLC', open: true, icon: <Big><path d="M7 30h30l4 10H3z" fill="#f58a0b" /><path d="M19 3h6l8 30q-11 6-22 0z" fill="#f07a0a" /><path d="M17.500 10h9l2 7h-13zM14 23h16l2 7q-10 5-20 0z" fill="#ececec" /></Big> },
  { name: 'Chrome', open: true, focus: true, icon: <Big><circle cx="21" cy="22" r="18.500" fill="#fbc62f" /><path d="M5 13a18.500 18.500 0 0 1 33 0H21a9 9 0 0 0-8 6z" fill="#dd4b3e" /><path d="M5 13l9 14q4 5 11 3l-6 10.500A18.500 18.500 0 0 1 5 13z" fill="#2da14d" /><circle cx="21" cy="22" r="8.500" fill="#fff" /><circle cx="21" cy="22" r="7" fill="#4285f4" /><ellipse cx="32" cy="31" rx="4" ry="5.500" fill="#f4f4f0" /><path d="M32 35v5M28 41h8" stroke="#f4f4f0" strokeWidth="2.500" /></Big> },
  { name: 'FileZilla', open: true, icon: <Big><path d="M3 3h38v38H3z" fill="#a90404" stroke="#8a0000" strokeWidth="2" strokeDasharray="2 2" /><path d="M12 35l5-26h12M15 21h11M22 22h13L24 36h12" stroke="#fff" strokeWidth="4.500" /></Big> },
  { name: 'GitHub', open: true, icon: <Big><circle cx="22" cy="22" r="18.500" fill="#e8eaf6" /><path d="M10 11l6 3q6-1 12 0l6-3q1 3 0 6 4 12-7 14v9H17v-9q-11-2-7-14-1-3 0-6z" fill="#4f2b7c" /><path d="M18 29h8v11h-8z" fill="#7a2a8c" /><path d="M9 29q4 1 5 4t4 2" stroke="#5b2b80" strokeWidth="2.500" /></Big> },
  { name: 'Skype', open: true, icon: <FaSkype size={40} color="#00aff0" /> },
];

const tray: [string, React.ReactNode][] = [
  ['Robot', <Art><path d="M10 0l3 7H7z" fill="#8895a3" /><circle cx="10" cy="12" r="7.500" fill="#1d3d80" /><circle cx="7" cy="12" r="2" fill="#ffe88a" /><circle cx="13" cy="12" r="2" fill="#ffe88a" /></Art>],
  ['Status', <Art><path d="M2 2q8-4 14 3 4 6 2 13-8 4-14-3-4-6-2-13z" fill="#7fba00" /><path d="M6 10l3 3 5-6" stroke="#fff" strokeWidth="2" /></Art>],
  ['Drive', <Art><path d="M7 1h6l7 12h-6z" fill="#f7c52e" /><path d="M7 1l3 6-7 12-3-6z" fill="#1b9e58" /><path d="M6 13h14l-3 6H3z" fill="#3b7ded" /></Art>],
  ['Kaspersky', <Art><path d="M1 0h5v9l6-9h7L6 20H1z" fill="#d8232a" /><path d="M8 10l9 9M17 11v8H9" stroke="#d9d9d9" strokeWidth="3" /></Art>],
  ['Steam', <Art><circle cx="10" cy="10" r="10" fill="#1a4470" /><g transform="translate(2 2)"><FaSteamSymbol size={16} color="#fff" /></g></Art>],
  ['Paint', <Art><circle cx="10" cy="10" r="9.500" fill="#f3b84b" /><circle cx="6" cy="6" r="2" fill="#d33" /><circle cx="13" cy="5" r="2" fill="#3a5" /><circle cx="5" cy="12" r="2" fill="#36c" /><circle cx="12" cy="14" r="3" fill="#fbe6b5" /></Art>],
  ['TeamViewer', <Art><path d="M1 0h15v15H1z" fill="#1a86dd" /><circle cx="8" cy="8" r="5.500" fill="#fff" /><path d="M3 8h10" stroke="#1a86dd" strokeWidth="2.500" /><rect x="9" y="14" width="11" height="5" rx="2" fill="#54d22d" /></Art>],
  ['USB', <Art><path d="M0 9l12-6 5 3-9 7z" fill="#777" /><circle cx="14" cy="14" r="5" fill="#34a23a" /><path d="M11 14l2 2 4-4" stroke="#fff" strokeWidth="1.500" /></Art>],
  ['Dropbox', <Art><FaDropbox size={20} color="#fff" /><circle cx="14" cy="14" r="5" fill="#34a23a" /><path d="M11 14l2 2 4-4" stroke="#fff" strokeWidth="1.500" /></Art>],
  ['Network', <Art><path d="M6 5h13v10H6zM9 19h7M12 15v4M1 1h4v7H1zM3 8v11" stroke="#fff" strokeWidth="1.800" /></Art>],
  ['Volume', <Art><path d="M1 7h3l6-6v18l-6-6H1z" fill="#fff" /><path d="M12 7q2 3 0 6M15 5q3 5 0 10" stroke="#ddd" strokeWidth="1.500" /></Art>],
];

export default function App() {
  return (
    <Desktop>
      <GlobalStyle />
      <BrowserFrame />
      <Administration />
      <Taskbar>
        {tasks.map((t) => (
          <Task key={t.name} $open={t.open} $focus={t.focus} aria-label={t.name}>{t.icon}</Task>
        ))}
        <Tray>
          <Lang>DE</Lang>
          <TrayArrow><Triangle as="div" $up $color="#fff" /></TrayArrow>
          {tray.map(([name, icon]) => <IconButton key={name} aria-label={name}>{icon}</IconButton>)}
          <Clock>10:35<br />13.01.2017</Clock>
          <ShowDesktop aria-label="Desktop anzeigen" />
        </Tray>
      </Taskbar>
      <Ink aria-hidden="true">
        <g transform="translate(640 380) scale(0.574 0.3333)">{writing.map((d) => <path key={d} d={d} />)}</g>
        <g transform="translate(640 780) scale(0.3325)">{dashes.map((d) => <path key={d} d={d} />)}</g>
      </Ink>
    </Desktop>
  );
}
